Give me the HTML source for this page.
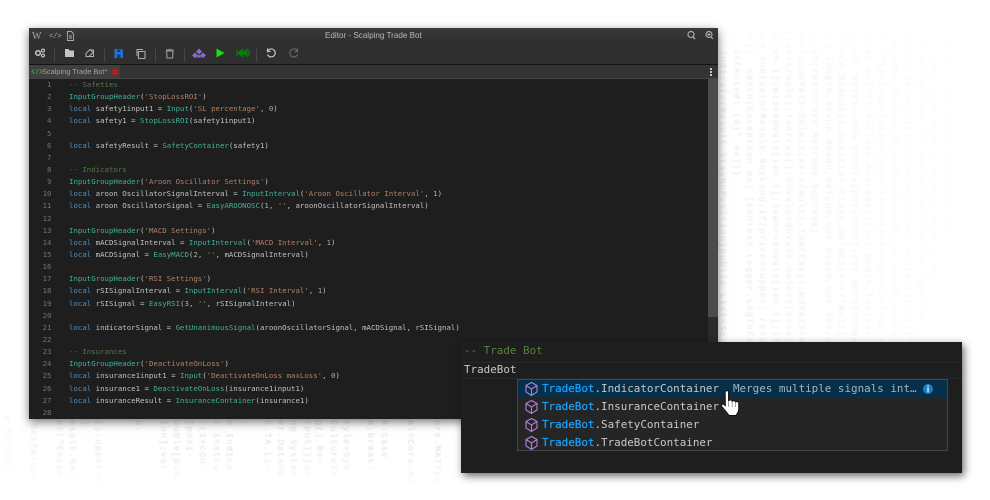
<!DOCTYPE html>
<html><head><meta charset="utf-8"><style>
html,body{margin:0;padding:0;background:#fff;width:990px;height:500px;overflow:hidden}
body{position:relative;font-family:"DejaVu Sans Mono",monospace}
.v{position:absolute;writing-mode:vertical-rl;font:9px/12px "Liberation Mono",monospace;letter-spacing:1px;white-space:pre;filter:blur(.4px)}
.o{position:absolute}
#win{position:absolute;left:29px;top:28px;width:689px;height:391px;background:#1e1e1e;box-shadow:0 3px 9px rgba(0,0,0,.55)}
#title{position:absolute;left:0;top:0;width:689px;height:16px;background:linear-gradient(#3a3a3a,#2d2d2d);}
#title span{position:absolute;left:296px;top:1px;font:8.1px/14px "Liberation Sans",sans-serif;color:#b8b8b8}
#tool{position:absolute;left:0;top:16px;width:689px;height:20px;background:#2f2f2f;border-bottom:1px solid #141414}
.sep{position:absolute;top:20px;width:1px;height:14px;background:#474747}
#tabs{position:absolute;left:0;top:37px;width:689px;height:13px;background:#333;border-bottom:1px solid #444}
#tab{position:absolute;left:0;top:0;width:91px;height:13px;background:#404040;font:7.4px/13px "Liberation Sans",sans-serif;color:#a0a0a0}
#nums{position:absolute;left:0;top:51px;width:22.5px;text-align:right;font:7.38px/12.14px "DejaVu Sans Mono",monospace;color:#727272;white-space:pre}
#code{position:absolute;left:40px;top:51px;font:7.38px/12.14px "DejaVu Sans Mono",monospace;color:#c2c2c2;white-space:pre}
.k{color:#5090c0}.f{color:#42b09a}.s{color:#b08068}.c{color:#4f7845}.n{color:#a0b690}
#sb{position:absolute;left:679px;top:51px;width:10px;height:340px;background:#2b2b2b}
#sb i{position:absolute;left:0;top:0;width:10px;height:238px;background:#4b4b4b}
#pop{position:absolute;left:461px;top:342px;width:501px;height:131px;background:#1e1e1e;box-shadow:2px 3px 8px rgba(0,0,0,.6);font:10.9px/16px "DejaVu Sans Mono",monospace;color:#c8c8c8;white-space:pre}
#cl{position:absolute;left:3px;top:1px;color:#55803f}
#lh{position:absolute;left:3px;top:20px;width:498px;height:15px;border-top:1px solid #282828;border-bottom:1px solid #282828}
#ln{position:absolute;left:3px;top:20px}
#list{position:absolute;left:56px;top:37px;width:429px;height:70px;background:#252526;border:1px solid #454545}
.r{position:absolute;left:0;width:429px;height:18px;line-height:18px}
.r b{font-weight:normal;color:#18a3ff;-webkit-text-stroke:.2px #18a3ff}
.r span.t{position:absolute;left:24px;top:0}
.r svg{position:absolute;left:6px;top:1px}
#d{position:absolute;left:215px;top:0;color:#9fb6c6}
</style></head><body>

<div class="v" style="left:716px;top:50px;color:#e2e2e2">IndicatorResult.StayNoPosition]public List&lt;Sc</div>
<div class="v" style="left:730px;top:36px;color:#e8e8e8">  detected: {0}".ex)}}</div>
<div class="v" style="left:743px;top:30px;color:#e8e8e8">rt}}  catch(Exception ex) {context.Logger.LogToFile</div>
<div class="v" style="left:756px;top:30px;color:#eaeaea">urn IndicatorResult.BuyLong;if(price&gt;=upper) return</div>
<div class="v" style="left:769px;top:30px;color:#ebebeb">s[len-1];mid=mdVals[len-1];lower=dnVals[len-1];if(</div>
<div class="v" style="left:782px;top:30px;color:#ececec">t(x=&gt;x/mult).ToArray();dnVals=dnVals.Select(x=&gt;x/m</div>
<div class="v" style="left:795px;top:30px;color:#ededed">pVals=upVals.Select(x=&gt;x/mult).ToArray();mdVals=mdV</div>
<div class="v" style="left:808px;top:30px;color:#eeeeee">s);if(ret==Core.RetCode.Success)</div>
<div class="v" style="left:822px;top:30px;color:#efefef">A(),length,devup,devdn,maType,out begin,out len,upV</div>
<div class="v" style="left:835px;top:30px;color:#f1f1f1">r=Core.Bbands(1,position,close.Select(x=&gt;x*mult).To</div>
<div class="v" style="left:848px;top:30px;color:#f2f2f2">s);var mdVals=new double[position];var dnVals=new</div>
<div class="v" style="left:862px;top:30px;color:#f4f4f4">0;var mult=1.0/close.Average();int begin,len;var</div>
<div class="v" style="left:875px;top:30px;color:#f5f5f5">-0;if(set-deviation);var close=instrument.Close;var</div>
<div class="v" style="left:888px;top:30px;color:#f7f7f7">IndicatorContext.PriceInstrument;int position=inst</div>
<div class="v" style="left:902px;top:30px;color:#f8f8f8">Result GetResult(IndicatorContext context){try{IPr</div>
<div class="v" style="left:915px;top:30px;color:#f9f9f9">ype MAType Sma;int deviation=0;double upper=m</div>
<div class="v" style="left:928px;top:30px;color:#fafafa">int length=20;double devup=2;double dev</div>
<div class="v" style="left:942px;top:30px;color:#fcfcfc">public class Bands:Indicator{public</div>

<div class="v" style="left:1px;top:416px;color:#f5f5f5">w ScriptPa-</div>
<div class="v" style="left:27px;top:424px;color:#ebebeb">GetParame-</div>
<div class="v" style="left:53px;top:420px;color:#e4e4e4">at("Excep-</div>
<div class="v" style="left:66px;top:420px;color:#e2e2e2">esult.Sell-</div>
<div class="v" style="left:79px;top:420px;color:#e2e2e2">)</div>
<div class="v" style="left:92px;top:420px;color:#e2e2e2">():upper=up</div>
<div class="v" style="left:131px;top:420px;color:#e0e0e0">n-</div>
<div class="v" style="left:157px;top:420px;color:#dedede">ion];var</div>
<div class="v" style="left:170px;top:420px;color:#dedede">ouble[posi-</div>
<div class="v" style="left:183px;top:420px;color:#dedede">[posi-</div>
<div class="v" style="left:196px;top:420px;color:#dedede">-(1+con-</div>
<div class="v" style="left:210px;top:420px;color:#dedede">t instru-</div>
<div class="v" style="left:223px;top:420px;color:#dedede">e Indica-</div>
<div class="v" style="left:236px;top:420px;color:#dedede">-</div>
<div class="v" style="left:261px;top:420px;color:#dedede">c.TA.Li-</div>
<div class="v" style="left:274px;top:420px;color:#dedede">er.DataOb-</div>
<div class="v" style="left:287px;top:420px;color:#dedede">ng System.</div>
<div class="v" style="left:301px;top:420px;color:#dedede">tput)}}us-</div>
<div class="v" style="left:313px;top:420px;color:#dedede">g().Re-</div>
<div class="v" style="left:327px;top:420px;color:#dedede">CultureIn-</div>
<div class="v" style="left:340px;top:420px;color:#dedede">tyle=Sys-</div>
<div class="v" style="left:364px;top:420px;color:#dedede">a;break;-</div>
<div class="v" style="left:378px;top:420px;color:#dedede">k:case</div>
<div class="v" style="left:404px;top:420px;color:#dedede">al=Core.MA-</div>
<div class="v" style="left:431px;top:420px;color:#dedede">ore.MATYpe</div>
<div class="o" style="left:0;top:450px;width:990px;height:40px;background:linear-gradient(rgba(255,255,255,0),#fff)"></div>
<div class="o" style="left:718px;top:20px;width:272px;height:50px;background:linear-gradient(#fff,rgba(255,255,255,0))"></div>

<div id="win" style="filter:blur(.3px)">
<div id="title"><span>Editor - Scalping Trade Bot</span>
<svg width="689" height="16" style="position:absolute;left:0;top:0" fill="none" stroke="#aaa">
<text x="3" y="11" font-family="Liberation Serif" font-size="10" fill="#aaa" stroke="none">W</text>
<text x="20" y="10" font-family="Liberation Mono" font-size="7" fill="#aaa" stroke="none">&lt;/&gt;</text>
<path d="M38.500 3.500h4l2 2v7h-6zM40 8h3M40 10h3" stroke-width=".9"/>
<circle cx="662" cy="6.500" r="3" stroke-width="1.200"/><path d="M664 9l2 2" stroke-width="1.500"/>
<circle cx="680" cy="6.500" r="3" stroke-width="1.200"/><path d="M682 9l2 2M678.500 6.500h3M680 5v3" stroke-width="1.200"/>
</svg></div>
<div id="tool"></div>
<div class="sep" style="left:25px"></div><div class="sep" style="left:75px"></div><div class="sep" style="left:126px"></div><div class="sep" style="left:155px"></div><div class="sep" style="left:227px"></div>
<svg width="300" height="20" style="position:absolute;left:0;top:16px" fill="none">
<circle cx="9" cy="9" r="2.300" stroke="#c8c8c8" stroke-width="1.500"/><circle cx="14" cy="6.500" r="1.500" stroke="#c8c8c8" stroke-width="1.100"/><circle cx="14" cy="11.500" r="1.500" stroke="#c8c8c8" stroke-width="1.100"/>
<path d="M36 5h3.500l1 1.500H45v6.500h-9z" fill="#c4c4c4"/>
<path d="M57 9.500l4-4 3 3-4 4h-3zM62 6h2.500v6.500H60" stroke="#b0b0b0" stroke-width="1"/>
<path d="M85.500 5h7l1.500 1.500V14h-8.500z" fill="#1e74d8"/><path d="M88 5.500h3.500V8H88zM88 10.500h3.500V14H88z" fill="#103f78"/>
<path d="M109.500 7.500h6.500v7h-6.500z" stroke="#aaa" stroke-width="1.100"/><path d="M108 12V5.500h6" stroke="#aaa" stroke-width="1.100"/>
<path d="M137.500 7h6.500l-.5 7h-5.500zM137 6h7.500M139.500 5.500h2.500" stroke="#8e8e8e" stroke-width="1.300"/>
<path d="M170 4.500l3 3-3 3-3-3zM166 8.500l3 3-3 2.500-3-2.500zM174 8.500l3 3-3 2.500-3-2.500zM170 10.500l2.500 3h-5z" fill="#8a6ad6"/>
<path d="M187.500 4.500l8 4.500-8 4.500z" fill="#16e016"/>
<path d="M208 5.500v7M220 5.500v7M213.500 5.500L209 9l4.500 3.500zM218 5.500L213.500 9l4.500 3.500z" stroke="#0b7a0b" fill="#0b7a0b" stroke-width="1.200"/>
<path d="M239 6.500a4 4 0 1 1-.5 4M238.500 4.500v3h3" stroke="#c4c4c4" stroke-width="1.200"/>
<path d="M268 6.500a4 4 0 1 0 .5 4M268.500 4.500v3h-3" stroke="#666" stroke-width="1.200"/>
</svg>
<div id="tabs"><div id="tab"><svg width="12" height="13" style="position:absolute;left:2px;top:0" fill="none" stroke="#3f9a3f"><path d="M3.500 4.500L1 6.500l2.500 2M8.500 4.500l2.500 2-2.500 2M6.800 4L5.200 9"/></svg><span style="position:absolute;left:13px;top:0">Scalping Trade Bot*</span><svg width="8" height="8" style="position:absolute;left:82px;top:3px" stroke="#e01010" stroke-width="2"><path d="M1.500 1.500l5 5M6.500 1.500l-5 5"/></svg></div>
<svg width="4" height="10" style="position:absolute;left:680px;top:2px" fill="#c8c8c8"><rect x="1" y="1" width="2" height="2"/><rect x="1" y="4" width="2" height="2"/><rect x="1" y="7" width="2" height="2"/></svg></div>
<div id="nums">1
2
3
4
5
6
7
8
9
10
11
12
13
14
15
16
17
18
19
20
21
22
23
24
25
26
27
28</div>
<div id="code"><span class="c">-- Safeties</span>
<span class="f">InputGroupHeader</span>(<span class="s">'StopLossROI'</span>)
<span class="k">local</span> safety1input1 = <span class="f">Input</span>(<span class="s">'SL percentage'</span>, <span class="n">0</span>)
<span class="k">local</span> safety1 = <span class="f">StopLossROI</span>(safety1input1)

<span class="k">local</span> safetyResult = <span class="f">SafetyContainer</span>(safety1)

<span class="c">-- Indicators</span>
<span class="f">InputGroupHeader</span>(<span class="s">'Aroon Oscillator Settings'</span>)
<span class="k">local</span> aroon OscillatorSignalInterval = <span class="f">InputInterval</span>(<span class="s">'Aroon Oscillator Interval'</span>, <span class="n">1</span>)
<span class="k">local</span> aroon OscillatorSignal = <span class="f">EasyAROONOSC</span>(<span class="n">1</span>, <span class="s">''</span>, aroonOscillatorSignalInterval)

<span class="f">InputGroupHeader</span>(<span class="s">'MACD Settings'</span>)
<span class="k">local</span> mACDSignalInterval = <span class="f">InputInterval</span>(<span class="s">'MACD Interval'</span>, <span class="n">1</span>)
<span class="k">local</span> mACDSignal = <span class="f">EasyMACD</span>(<span class="n">2</span>, <span class="s">''</span>, mACDSignalInterval)

<span class="f">InputGroupHeader</span>(<span class="s">'RSI Settings'</span>)
<span class="k">local</span> rSISignalInterval = <span class="f">InputInterval</span>(<span class="s">'RSI Interval'</span>, <span class="n">1</span>)
<span class="k">local</span> rSISignal = <span class="f">EasyRSI</span>(<span class="n">3</span>, <span class="s">''</span>, rSISignalInterval)

<span class="k">local</span> indicatorSignal = <span class="f">GetUnanimousSignal</span>(aroonOscillatorSignal, mACDSignal, rSISignal)

<span class="c">-- Insurances</span>
<span class="f">InputGroupHeader</span>(<span class="s">'DeactivateOnLoss'</span>)
<span class="k">local</span> insurance1input1 = <span class="f">Input</span>(<span class="s">'DeactivateOnLoss maxLoss'</span>, <span class="n">0</span>)
<span class="k">local</span> insurance1 = <span class="f">DeactivateOnLoss</span>(insurance1input1)
<span class="k">local</span> insuranceResult = <span class="f">InsuranceContainer</span>(insurance1)
</div>
<div id="sb"><i></i></div>
</div>

<div id="pop" style="filter:blur(.2px)">
<div id="lh"></div>
<div id="cl">-- Trade Bot</div>
<div id="ln">TradeBot</div>
<div id="list">
<div class="r" style="top:0;background:#062f4a"><svg width="15" height="16" fill="none" stroke="#b180d7" stroke-width="1.100"><path d="M7.500 1.500l5.500 3v6.500l-5.500 3.500L2 11V4.500zM2 4.500l5.500 3.500 5.500-3.500M7.500 8v6.500"/></svg><span class="t"><b>TradeBot</b>.IndicatorContainer</span><span id="d">Merges multiple signals int…</span><svg width="12" height="12" style="left:404px;top:3px"><circle cx="6" cy="6" r="5" fill="#1b80c4"/><rect x="5.300" y="2.200" width="1.500" height="1.500" fill="#cfe6f5"/><rect x="5.300" y="4.600" width="1.500" height="4.800" fill="#cfe6f5"/></svg></div>
<div class="r" style="top:18px"><svg width="15" height="16" fill="none" stroke="#b180d7" stroke-width="1.100"><path d="M7.500 1.500l5.500 3v6.500l-5.500 3.500L2 11V4.500zM2 4.500l5.500 3.500 5.500-3.500M7.500 8v6.500"/></svg><span class="t"><b>TradeBot</b>.InsuranceContainer</span></div>
<div class="r" style="top:36px"><svg width="15" height="16" fill="none" stroke="#b180d7" stroke-width="1.100"><path d="M7.500 1.500l5.500 3v6.500l-5.500 3.500L2 11V4.500zM2 4.500l5.500 3.500 5.500-3.500M7.500 8v6.500"/></svg><span class="t"><b>TradeBot</b>.SafetyContainer</span></div>
<div class="r" style="top:54px"><svg width="15" height="16" fill="none" stroke="#b180d7" stroke-width="1.100"><path d="M7.500 1.500l5.500 3v6.500l-5.500 3.500L2 11V4.500zM2 4.500l5.500 3.500 5.500-3.500M7.500 8v6.500"/></svg><span class="t"><b>TradeBot</b>.TradeBotContainer</span></div>
</div>
</div>

<svg width="26" height="30" style="position:absolute;left:719px;top:388px">
<g transform="translate(.5 0) scale(1.130 1)">
<path d="M5 4.500c0-2.500 3-2.500 3 0V13c.5-1.500 3-1.500 3.200.5 .6-1.300 2.900-1.100 3 .7 .8-1 2.800-.7 2.800 1V21c0 3-1.500 5-2.500 6.500H8.500C7 25 4.500 22 2 18.500c-1-1.700 1-3 2.300-1.800L5.200 18z" fill="#fff" stroke="#111" stroke-width=".9" stroke-linejoin="round"/>
<path d="M8 14v5M11.200 14v5M14.200 15v4" stroke="#888" stroke-width=".7"/>
</g>
</svg>
</body></html>
